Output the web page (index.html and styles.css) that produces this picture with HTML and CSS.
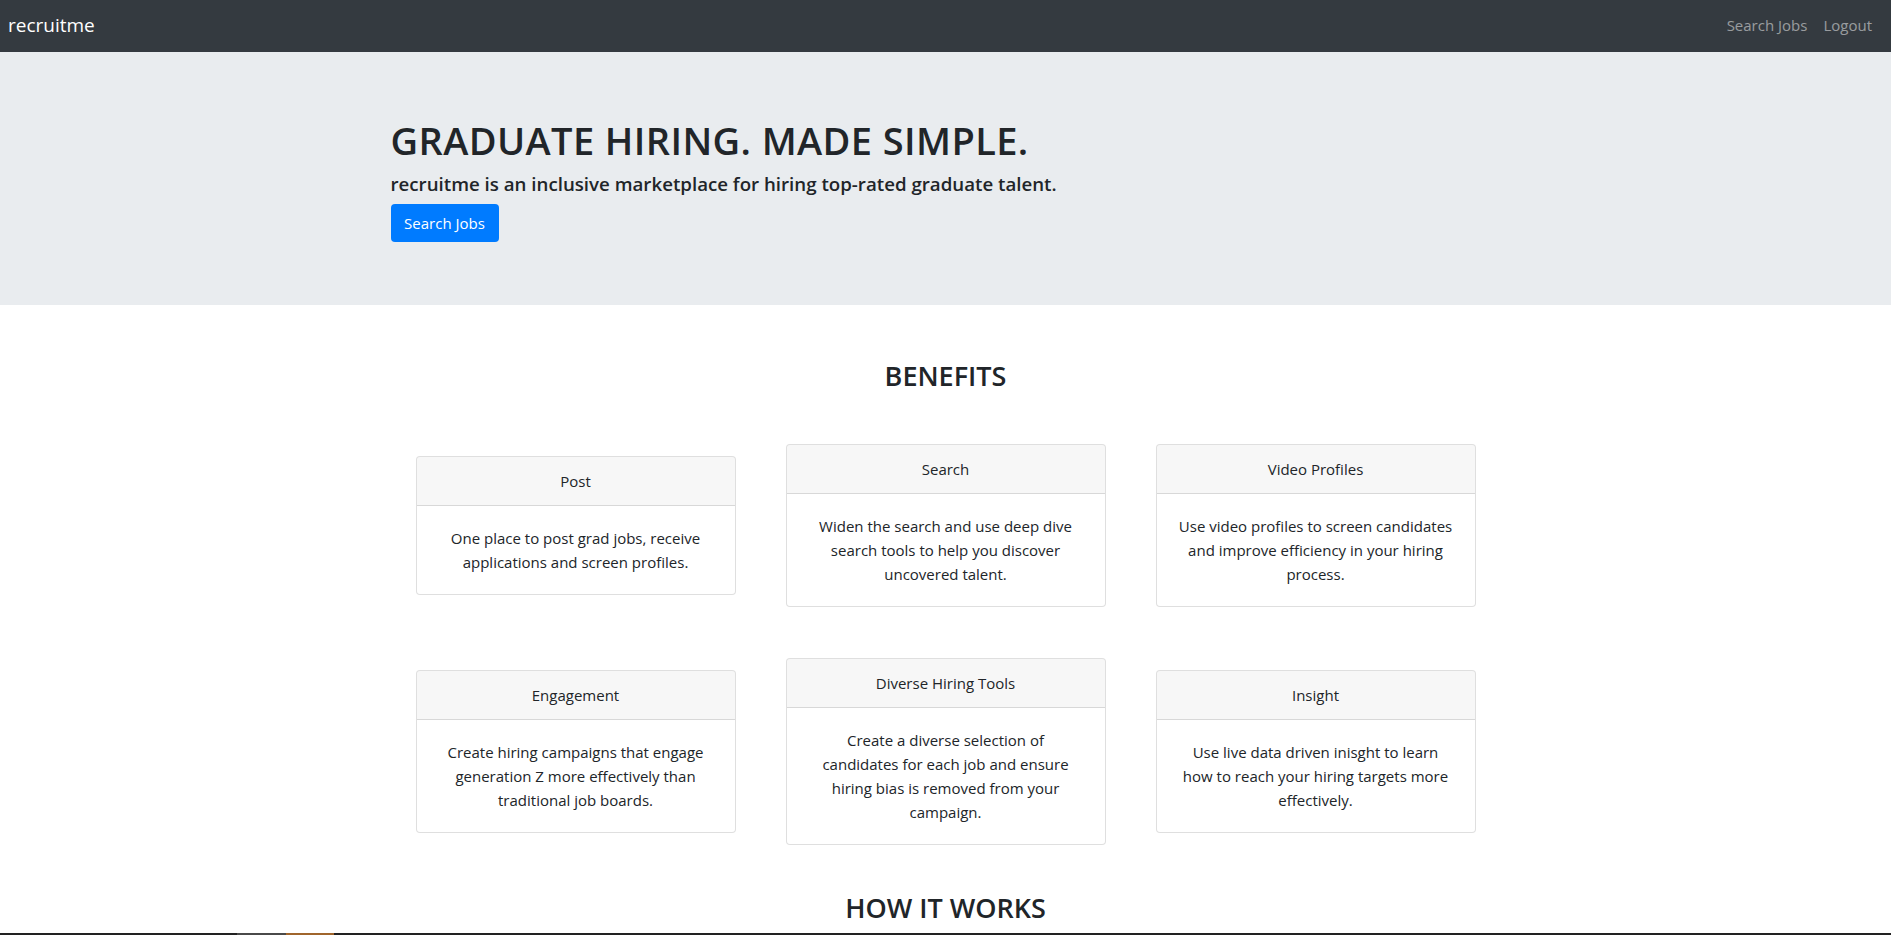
FILE: index.html
```html
<!DOCTYPE html>
<html lang="en">
<head>
<meta charset="utf-8">
<title>recruitme</title>
<link rel="stylesheet" href="styles.css">
</head>
<body>
<nav class="navbar">
  <a class="brand" href="#">recruitme</a>
  <div class="nav-links">
    <a class="nav-link" href="#">Search Jobs</a>
    <a class="nav-link" href="#">Logout</a>
  </div>
</nav>

<header class="jumbotron">
  <div class="container">
    <h1 class="hero-title">GRADUATE HIRING. MADE SIMPLE.</h1>
    <h5 class="hero-sub">recruitme is an inclusive marketplace for hiring top-rated graduate talent.</h5>
    <a class="btn-primary" href="#">Search Jobs</a>
  </div>
</header>

<section class="benefits">
  <h2 class="section-title">BENEFITS</h2>
  <div class="cards">
    <div class="card">
      <div class="card-header">Post</div>
      <div class="card-body"><p>One place to post grad jobs, receive applications and screen profiles.</p></div>
    </div>
    <div class="card">
      <div class="card-header">Search</div>
      <div class="card-body"><p>Widen the search and use deep dive search tools to help you discover uncovered talent.</p></div>
    </div>
    <div class="card">
      <div class="card-header">Video Profiles</div>
      <div class="card-body"><p>Use video profiles to screen candidates and improve efficiency in your hiring process.</p></div>
    </div>
    <div class="card">
      <div class="card-header">Engagement</div>
      <div class="card-body"><p>Create hiring campaigns that engage generation Z more effectively than traditional job boards.</p></div>
    </div>
    <div class="card">
      <div class="card-header">Diverse Hiring Tools</div>
      <div class="card-body"><p>Create a diverse selection of<br>candidates for each job and ensure<br>hiring bias is removed from your<br>campaign.</p></div>
    </div>
    <div class="card">
      <div class="card-header">Insight</div>
      <div class="card-body"><p>Use live data driven inisght to learn how to reach your hiring targets more effectively.</p></div>
    </div>
  </div>
  <h2 class="section-title how">HOW IT WORKS</h2>
</section>

<div class="taskbar">
  <span class="tb-gray"></span><span class="tb-orange"></span>
</div>
</body>
</html>
```

FILE: styles.css
```css
* { box-sizing: border-box; }

html, body {
  margin: 0;
  padding: 0;
}

body {
  font-family: "Open Sans", "Noto Sans", "DejaVu Sans", sans-serif;
  font-size: 15px;
  line-height: 24px;
  color: #212529;
  background: #fff;
}

a { text-decoration: none; }

.navbar {
  height: 52px;
  background: #343a40;
  display: flex;
  align-items: center;
  justify-content: space-between;
  padding: 0 11px 0 8px;
}

.brand {
  color: #fff;
  font-size: 19px;
  line-height: 30px;
  padding-bottom: 2px;
}

.nav-links {
  display: flex;
}

.nav-link {
  color: rgba(255, 255, 255, 0.5);
  font-size: 15px;
  line-height: 24px;
  padding: 0 8px 2px;
}

.jumbotron {
  background: #e9ecef;
  padding: 67px 0 63px;
}

.container {
  width: 1110px;
  margin: 0 auto;
}

.hero-title {
  margin: 0 0 10px;
  font-size: 38px;
  line-height: 43px;
  font-weight: 600;
  letter-spacing: 0.4px;
}

.hero-sub {
  margin: 0 0 8px;
  font-size: 18.7px;
  line-height: 24px;
  font-weight: 600;
}

.btn-primary {
  display: inline-block;
  background: #007bff;
  color: #fff;
  font-size: 15px;
  line-height: 24px;
  padding: 7px 12px;
  border-radius: 4px;
  width: 108px;
  text-align: center;
}

.benefits {
  padding-bottom: 80px;
}

.section-title {
  margin: 54px 0 51px;
  text-align: center;
  font-size: 27px;
  line-height: 34px;
  font-weight: 600;
}

.section-title.how {
  margin: 46px 0 0;
}

.cards {
  display: grid;
  grid-template-columns: repeat(3, 320px);
  column-gap: 50px;
  row-gap: 51px;
  justify-content: center;
  align-items: center;
}

.card {
  border: 1px solid rgba(0, 0, 0, 0.125);
  border-radius: 4px;
  background: #fff;
  overflow: hidden;
}

.card-header {
  background: rgba(0, 0, 0, 0.03);
  border-bottom: 1px solid rgba(0, 0, 0, 0.125);
  padding: 12px 20px;
  text-align: center;
}

.card-body {
  padding: 20px;
  text-align: center;
}

.card-body p {
  margin: 0;
}

.taskbar {
  position: fixed;
  left: 0;
  right: 0;
  bottom: 0;
  height: 2px;
  background: #222;
  display: flex;
  padding-left: 237px;
}

.tb-gray {
  width: 49px;
  background: #4a4a4a;
}

.tb-orange {
  width: 48px;
  background: #a0652c;
}
```
